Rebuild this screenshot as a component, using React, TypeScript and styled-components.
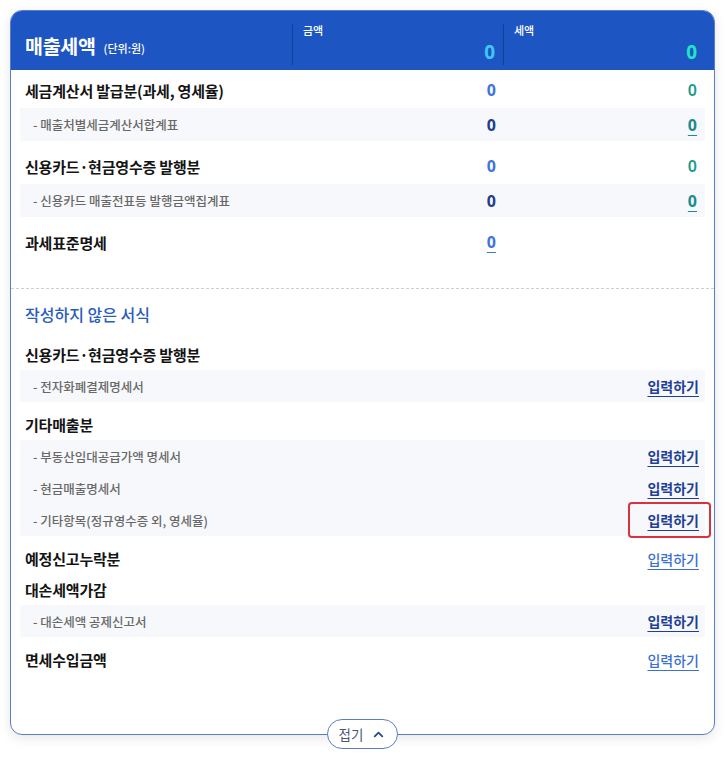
import * as React from 'react';
import styled, { createGlobalStyle, css } from 'styled-components';
import { ChevronUp } from 'lucide-react';

const GlobalStyle = createGlobalStyle`
    body {
        margin: 0;
        background: #ffffff;
        font-family: "Noto Sans CJK KR", "Noto Sans", sans-serif;
    }
`;

interface IValueRow {
    label: string;
    amount: string;
    tax?: string;
    subs?: { label: string; amount: string; tax: string }[];
    amountLink?: boolean;
}

const reportRows: IValueRow[] = [
    {
        label: '세금계산서 발급분(과세, 영세율)',
        amount: '0',
        tax: '0',
        subs: [{ label: '매출처별세금계산서합계표', amount: '0', tax: '0' }],
    },
    {
        label: '신용카드·현금영수증 발행분',
        amount: '0',
        tax: '0',
        subs: [{ label: '신용카드 매출전표등 발행금액집계표', amount: '0', tax: '0' }],
    },
    { label: '과세표준명세', amount: '0', amountLink: true },
];

interface IFormRow {
    label: string;
    link?: boolean;
    subs?: { label: string; marked?: boolean }[];
}

const formRows: IFormRow[] = [
    { label: '신용카드·현금영수증 발행분', subs: [{ label: '전자화폐결제명세서' }] },
    {
        label: '기타매출분',
        subs: [
            { label: '부동산임대공급가액 명세서' },
            { label: '현금매출명세서' },
            { label: '기타항목(정규영수증 외, 영세율)', marked: true },
        ],
    },
    { label: '예정신고누락분', link: true },
    { label: '대손세액가감', subs: [{ label: '대손세액 공제신고서' }] },
    { label: '면세수입금액', link: true },
];

export default function App() {
    const [open, setOpen] = React.useState(true);

    return (
        <>
            <GlobalStyle />
            <Card>
                <Header>
                    <TitleCell>
                        <Title>매출세액</Title>
                        <Unit>(단위:원)</Unit>
                    </TitleCell>
                    <SumCell>
                        <SumLabel>금액</SumLabel>
                        <SumValue kind="amount">0</SumValue>
                    </SumCell>
                    <SumCell>
                        <SumLabel>세액</SumLabel>
                        <SumValue kind="tax">0</SumValue>
                    </SumCell>
                </Header>

                <ValueSection>
                    {reportRows.map(row => (
                        <Group key={row.label}>
                            <MainValueRow>
                                <MainLabel>{row.label}</MainLabel>
                                <Amount underline={row.amountLink}>{row.amount}</Amount>
                                <Tax>{row.tax}</Tax>
                            </MainValueRow>
                            {row.subs && (
                                <SubList>
                                    {row.subs.map(sub => (
                                        <SubValueRow key={sub.label}>
                                            <SubLabel>- {sub.label}</SubLabel>
                                            <SubAmount>{sub.amount}</SubAmount>
                                            <SubTax>{sub.tax}</SubTax>
                                        </SubValueRow>
                                    ))}
                                </SubList>
                            )}
                        </Group>
                    ))}
                </ValueSection>

                {open && (
                    <FormSection>
                        <SectionTitle>작성하지 않은 서식</SectionTitle>
                        {formRows.map(row => (
                            <Group key={row.label}>
                                <MainFormRow>
                                    <MainLabel>{row.label}</MainLabel>
                                    {row.link && <InputLink>입력하기</InputLink>}
                                </MainFormRow>
                                {row.subs && (
                                    <SubList>
                                        {row.subs.map(sub => (
                                            <SubFormRow key={sub.label}>
                                                <SubLabel>- {sub.label}</SubLabel>
                                                <InputLink strong marked={sub.marked}>입력하기</InputLink>
                                            </SubFormRow>
                                        ))}
                                    </SubList>
                                )}
                            </Group>
                        ))}
                    </FormSection>
                )}
            </Card>
            <Footer>
                <FoldButton onClick={() => setOpen(!open)}>
                    접기
                    <ChevronUp size={15} strokeWidth={3} color="#2d4b8e" />
                </FoldButton>
            </Footer>
        </>
    );
}

const Card = styled.section`
    margin: 10px 10px 0;
    border: 1px solid #5a7ec6;
    border-radius: 12px;
    overflow: hidden;
    background: #fff;
    box-shadow: 0 3px 12px rgba(0, 0, 0, 0.1);
`;

const Header = styled.header`
    display: grid;
    grid-template-columns: 281px 211px 1fr;
    height: 59px;
    box-sizing: border-box;
    padding: 13px 0 5px;
    background: #1d55c3;
    color: #fff;
`;

const TitleCell = styled.div`
    display: flex;
    align-items: center;
    gap: 8px;
    padding: 2px 0 0 14px;
`;

const Title = styled.h1`
    margin: 0;
    font-size: 19.5px;
    font-weight: 700;
    letter-spacing: -0.3px;
`;

const Unit = styled.span`
    font-size: 11px;
    font-weight: 500;
    margin-top: 5px;
`;

const SumCell = styled.div`
    display: flex;
    flex-direction: column;
    justify-content: space-between;
    border-left: 1px solid rgba(10, 40, 110, 0.45);
    padding: 0 8px 3px 10px;

    &:last-child {
        padding-right: 17px;
    }
`;

const SumLabel = styled.span`
    font-size: 11px;
    font-weight: 500;
    line-height: 13px;
`;

const SumValue = styled.span<{ kind: 'amount' | 'tax' }>`
    align-self: flex-end;
    font-family: "Noto Sans", sans-serif;
    font-size: 19px;
    font-weight: 700;
    line-height: 20px;
    color: ${p => (p.kind === 'amount' ? '#40c8fb' : '#22e3c6')};
`;

const ValueSection = styled.div`
    padding: 2px 9px 28px;
    border-bottom: 1px dashed #cfcfcf;
`;

const FormSection = styled.div`
    padding: 9px 9px 59px;
`;

const SectionTitle = styled.h2`
    margin: 0 0 9px 5px;
    height: 32px;
    line-height: 32px;
    font-size: 16px;
    font-weight: 500;
    color: #2a5cbd;
`;

const Group = styled.div``;

const SubList = styled.div`
    margin-bottom: 7px;
    background: #f7f8fb;
`;

const valueGrid = css`
    display: grid;
    grid-template-columns: 1fr 180px 201px;
    align-items: center;
    padding-right: 8px;
`;

const MainValueRow = styled.div`
    ${valueGrid};
    height: 36px;
    padding-left: 5px;
`;

const SubValueRow = styled.div`
    ${valueGrid};
    height: 33px;
    padding-left: 13px;
`;

const MainFormRow = styled.div`
    display: flex;
    justify-content: space-between;
    align-items: center;
    height: 31px;
    padding: 0 6px 0 5px;
`;

const SubFormRow = styled.div`
    display: flex;
    justify-content: space-between;
    align-items: center;
    height: 32px;
    padding: 0 6px 0 13px;
`;

const MainLabel = styled.span`
    font-size: 15px;
    font-weight: 700;
    color: #141414;
    letter-spacing: -0.2px;
`;

const SubLabel = styled.span`
    font-size: 12.5px;
    font-weight: 500;
    color: #686868;
`;

const numberText = css`
    justify-self: end;
    font-family: "Noto Sans", sans-serif;
    font-size: 16px;
    line-height: 20px;
`;

const Amount = styled.span<{ underline?: boolean }>`
    ${numberText};
    font-weight: 700;
    color: #3d72df;
    text-decoration: ${p => (p.underline ? 'underline' : 'none')};
    text-underline-offset: 4px;
`;

const Tax = styled.span`
    ${numberText};
    font-weight: 600;
    color: #1c9a8b;
`;

const SubAmount = styled.span`
    ${numberText};
    font-weight: 700;
    color: #213c8c;
`;

const SubTax = styled.span`
    ${numberText};
    font-weight: 700;
    color: #1a8b8d;
    text-decoration: underline;
    text-underline-offset: 4px;
`;

const InputLink = styled.a<{ strong?: boolean; marked?: boolean }>`
    position: relative;
    font-size: 14px;
    font-weight: ${p => (p.strong ? 700 : 500)};
    color: ${p => (p.strong ? '#1f3e98' : '#3a70d6')};
    text-decoration: underline;
    text-underline-offset: 4px;
    cursor: pointer;

    ${p =>
        p.marked &&
        css`
            &::after {
                content: '';
                position: absolute;
                left: -19px;
                right: -12px;
                top: -8px;
                bottom: -8px;
                border: 2.5px solid #d8333c;
                border-radius: 4px;
            }
        `}
`;

const Footer = styled.div`
    display: flex;
    justify-content: center;
    margin-top: -16px;
`;

const FoldButton = styled.button`
    display: flex;
    align-items: center;
    gap: 8px;
    height: 30px;
    padding: 0 11px 0 11px;
    border: 1px solid #5a7ec6;
    border-radius: 15px;
    background: #fff;
    font-family: "Noto Sans CJK KR", sans-serif;
    font-size: 13.5px;
    color: #4b5670;
    cursor: pointer;
`;
